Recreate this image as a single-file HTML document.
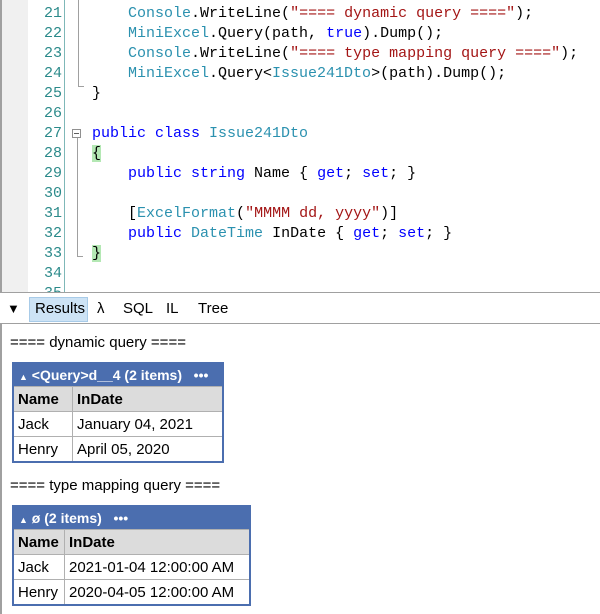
<!DOCTYPE html>
<html><head><style>
body{margin:0;width:600px;height:614px;overflow:hidden;background:#fff;font-family:"Liberation Sans",sans-serif;position:relative}
#ed{position:absolute;left:0;top:0;width:600px;height:293px;border-bottom:1px solid #a0a0a0;box-sizing:border-box;overflow:hidden}
.lb{position:absolute;left:0;width:2px;background:#a0a0a0}
#gut{position:absolute;left:2px;top:0;width:26px;height:293px;background:#f0f0f0}
#sep{position:absolute;left:64px;top:0;width:1px;height:293px;background:#7fb8b8}
.ln{position:absolute;left:28px;width:34px;text-align:right;color:#2b8a8a;font:15px "Liberation Mono",monospace;line-height:20px}
.cd{position:absolute;left:92px;white-space:pre;font:15px "Liberation Mono",monospace;line-height:20px;color:#000}
.t{color:#2b91af}.k{color:#0000ff}.s{color:#a31515}
.gb{background:#b4e8b4}
#tabs{position:absolute;top:295px;left:0;width:600px;height:28px;border-bottom:1px solid #a0a0a0;font-size:15px}
#tabs span{position:absolute;top:3px;line-height:22px}
#res{position:absolute;left:0;top:324px;width:600px;height:290px}
.txt{position:absolute;left:10px;font-size:15px}
table{position:absolute;left:12px;border-collapse:collapse;font-size:15px;border:2px solid #4b6eaf}
td,th{border:1px solid #b0b0b0;padding:0 4px;height:24px;text-align:left;white-space:nowrap}
th{background:#dcdcdc;font-weight:bold}
.hd td{background:#4b6eaf;color:#fff;font-weight:bold;border:none;height:22px;padding:0 5px;font-size:14px}
</style></head><body>
<div id="ed">
<div class="lb" style="top:0;height:293px"></div>
<div id="gut"></div><div id="sep"></div>
<div style="position:absolute;left:78px;top:0;width:1px;height:86px;background:#a0a0a0"></div>
<div style="position:absolute;left:78px;top:86px;width:6px;height:1px;background:#a0a0a0"></div>
<div style="position:absolute;left:72px;top:129px;width:9px;height:9px;border:1px solid #909090;box-sizing:border-box;background:#fff"></div>
<div style="position:absolute;left:74px;top:133px;width:5px;height:1px;background:#606060"></div>
<div style="position:absolute;left:77px;top:138px;width:1px;height:118px;background:#a0a0a0"></div>
<div style="position:absolute;left:77px;top:256px;width:6px;height:1px;background:#a0a0a0"></div>
<div class="ln" style="top:4px">21<br>22<br>23<br>24<br>25<br>26<br>27<br>28<br>29<br>30<br>31<br>32<br>33<br>34<br>35</div>
<div class="cd" style="top:4px">    <span class="t">Console</span>.WriteLine(<span class="s">"==== dynamic query ===="</span>);
    <span class="t">MiniExcel</span>.Query(path, <span class="k">true</span>).Dump();
    <span class="t">Console</span>.WriteLine(<span class="s">"==== type mapping query ===="</span>);
    <span class="t">MiniExcel</span>.Query&lt;<span class="t">Issue241Dto</span>&gt;(path).Dump();
}

<span class="k">public class</span> <span class="t">Issue241Dto</span>
<span class="gb">{</span>
    <span class="k">public string</span> Name { <span class="k">get</span>; <span class="k">set</span>; }

    [<span class="t">ExcelFormat</span>(<span class="s">"MMMM dd, yyyy"</span>)]
    <span class="k">public</span> <span class="t">DateTime</span> InDate { <span class="k">get</span>; <span class="k">set</span>; }
<span class="gb">}</span></div>
</div>
<div id="tabs">
<span style="left:7px;font-size:13px">▼</span>
<span style="left:29px;width:59px;height:25px;top:2px;background:#cde3f5;border:1px solid #a8cbe8;box-sizing:border-box"></span>
<span style="left:35px">Results</span>
<span style="left:97px">λ</span>
<span style="left:123px">SQL</span>
<span style="left:166px">IL</span>
<span style="left:198px">Tree</span>
</div>
<div class="lb" style="top:324px;height:290px"></div>
<div id="res">
<div class="txt" style="top:10px">==== dynamic query ====</div>
<table style="top:38px;width:212px">
<tr class="hd"><td colspan="2"><span style="font-size:9px">▲</span> &lt;Query&gt;d__4 (2 items) &nbsp;&nbsp;•••</td></tr>
<tr><th style="width:50px">Name</th><th>InDate</th></tr>
<tr><td>Jack</td><td>January 04, 2021</td></tr>
<tr><td>Henry</td><td>April 05, 2020</td></tr>
</table>
<div class="txt" style="top:153px">==== type mapping query ====</div>
<table style="top:181px;width:239px">
<tr class="hd"><td colspan="2"><span style="font-size:9px">▲</span> ø (2 items) &nbsp;&nbsp;•••</td></tr>
<tr><th style="width:42px">Name</th><th>InDate</th></tr>
<tr><td>Jack</td><td>2021-01-04 12:00:00 AM</td></tr>
<tr><td>Henry</td><td>2020-04-05 12:00:00 AM</td></tr>
</table>
</div>
</body></html>
